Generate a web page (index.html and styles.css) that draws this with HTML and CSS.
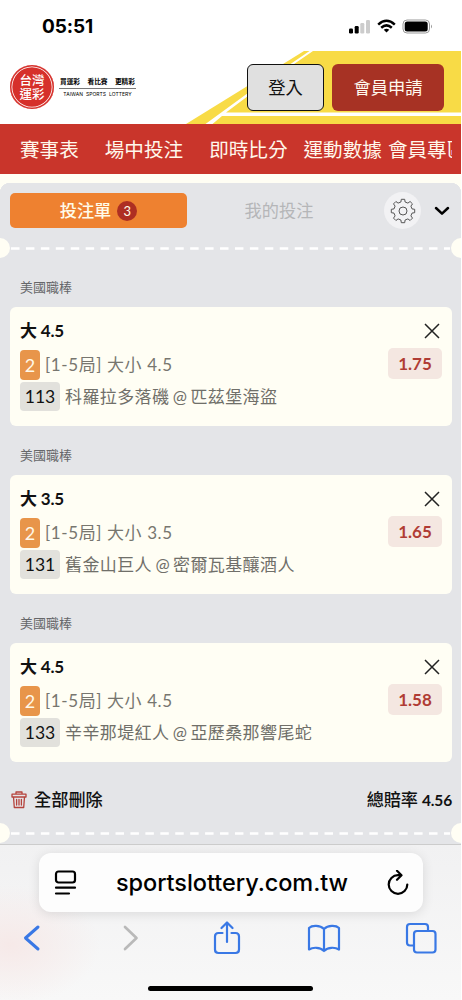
FILE: index.html
```
<!DOCTYPE html>
<html lang="zh-Hant">
<head>
<meta charset="utf-8">
<meta name="viewport" content="width=device-width, initial-scale=1">
<title>台灣運彩</title>
<link rel="stylesheet" href="styles.css">
</head>
<body>
<div class="phone">
  <div class="status">
    <span class="clock">05:51</span>
    <svg class="status-icons" width="86" height="18" viewBox="0 0 86 18">
      <rect x="2" y="10.500" width="4" height="5" rx="1.2"/>
      <rect x="7.7" y="8" width="4" height="7.500" rx="1.200"/>
      <rect x="13.300" y="5" width="4" height="10.500" rx="1.200" fill="#ccc"/>
      <rect x="19" y="2" width="4" height="13.500" rx="1.200" fill="#ccc"/>
      <g fill="none" stroke="#000" stroke-width="2.500"><path d="M31.200 6.600Q39.500 -1 47.800 6.600M34.200 9.700Q39.500 5 44.800 9.700"/></g>
      <path d="M39.500 14.500L36.700 11.800Q39.500 9.600 42.300 11.800Z"/>
      <rect x="56" y="2" width="26.500" height="13" rx="4" fill="none" stroke="#999"/>
      <rect x="57.700" y="3.600" width="23" height="9.800" rx="2.500"/>
      <path d="M84 6.500Q86 8.500 84 10.500Z" fill="#999"/>
    </svg>
  </div>

  <header class="header">
    <svg class="art" width="275" height="73" viewBox="0 0 275 73">
      <path d="M118 0H275V73H0Z" fill="#f8db46"/>
      <path d="M123.500 0L127 0L66 42L40 61.500H275V65H36L26.500 73H19.500L62 42Z" fill="#fff"/>
    </svg>
    <div class="brand">
      <div class="seal"><span>台灣</span><span>運彩</span></div>
      <div class="tagline">
        <div class="tag-zh"><span>買運彩</span><span>看比賽</span><span>更精彩</span></div>
        <div class="tag-en">TAIWAN&nbsp; SPORTS&nbsp; LOTTERY</div>
      </div>
    </div>
    <div class="account"><button class="btn login">登入</button><button class="btn join">會員申請</button></div>
  </header>

  <nav class="nav"><div class="nav-track">
    <a>賽事表</a><a>場中投注</a><a>即時比分</a><a class="near">運動數據</a><a>會員專區</a>
  </div></nav>

  <main class="slip">
    <div class="tabs">
      <div class="tab active">投注單<span class="count">3</span></div>
      <div class="tab">我的投注</div>
      <div class="gear"><svg width="28" height="28" viewBox="-14 -14 28 28" fill="none" stroke="#555" stroke-width="1" stroke-linejoin="round">
        <circle r="4"/>
        <path d="M-2.100 -9L-1.700 -11.700H1.700L2.100 -9L4.900 -7.900L7.100 -9.500L9.500 -7.100L7.900 -4.900L9 -2.100L11.700 -1.700V1.700L9 2.100L7.900 4.900L9.500 7.100L7.100 9.500L4.900 7.900L2.100 9L1.700 11.700H-1.700L-2.100 9L-4.900 7.900L-7.100 9.500L-9.500 7.100L-7.900 4.900L-9 2.100L-11.700 1.700V-1.700L-9 -2.100L-7.900 -4.900L-9.500 -7.100L-7.100 -9.500L-4.900 -7.900Z"/>
      </svg></div>
      <svg class="fold" width="16" height="10" viewBox="0 0 16 10"><path d="M2 2L8 7.600L14 2" fill="none" stroke="#000" stroke-width="2.500" stroke-linecap="round" stroke-linejoin="round"/></svg>
    </div>
    <div class="tear"><i></i><svg width="441" height="3" viewBox="0 0 441 3"><path d="M1 1.500H440" stroke="#fff" stroke-width="2.600" stroke-dasharray="8.500 6.430"/></svg><i></i></div>

    <section class="bet">
      <h2>美國職棒</h2>
      <div class="card">
        <div class="row"><b class="pick">大 4.5</b><svg class="close" width="16" height="16" viewBox="0 0 16 16"><path d="M1 1L15 15M15 1L1 15"/></svg></div>
        <div class="row mid"><div><span class="chip">2</span><span class="kind">[1-5局] 大小 4.5</span></div><b class="odds">1.75</b></div>
        <div class="match"><span class="num">113</span><span>科羅拉多落磯<span class="at">@</span>匹茲堡海盜</span></div>
      </div>
    </section>
    <section class="bet">
      <h2>美國職棒</h2>
      <div class="card">
        <div class="row"><b class="pick">大 3.5</b><svg class="close" width="16" height="16" viewBox="0 0 16 16"><path d="M1 1L15 15M15 1L1 15"/></svg></div>
        <div class="row mid"><div><span class="chip">2</span><span class="kind">[1-5局] 大小 3.5</span></div><b class="odds">1.65</b></div>
        <div class="match"><span class="num">131</span><span>舊金山巨人<span class="at">@</span>密爾瓦基釀酒人</span></div>
      </div>
    </section>
    <section class="bet">
      <h2>美國職棒</h2>
      <div class="card">
        <div class="row"><b class="pick">大 4.5</b><svg class="close" width="16" height="16" viewBox="0 0 16 16"><path d="M1 1L15 15M15 1L1 15"/></svg></div>
        <div class="row mid"><div><span class="chip">2</span><span class="kind">[1-5局] 大小 4.5</span></div><b class="odds">1.58</b></div>
        <div class="match"><span class="num">133</span><span>辛辛那堤紅人<span class="at">@</span>亞歷桑那響尾蛇</span></div>
      </div>
    </section>

    <div class="summary">
      <div class="clear"><svg width="16" height="18" viewBox="0 0 16 18" fill="none" stroke="#b5433c" stroke-width="1.300" stroke-linejoin="round" stroke-linecap="round"><path d="M1 3.200H15V6H1ZM5 3V1H11V3M2.500 6L3.300 16.500H12.700L13.500 6M5.600 8.500V14M8 8.500V14M10.400 8.500V14"/></svg>全部刪除</div>
      <div class="total">總賠率 <span>4.56</span></div>
    </div>
    <div class="tear bottom"><i></i><svg width="441" height="3" viewBox="0 0 441 3"><path d="M1 1.500H440" stroke="#fff" stroke-width="2.600" stroke-dasharray="8.500 6.430"/></svg><i></i></div>
  </main>

  <footer class="browser">
    <div class="address">
      <svg width="24" height="26" viewBox="0 0 24 26" fill="none" stroke="#000" stroke-width="2.200" stroke-linecap="round"><rect x="2" y="1.500" width="19" height="11" rx="2.500"/><path d="M2 17.700H21M2 23.500H15"/></svg>
      <span>sportslottery.com.tw</span>
      <svg width="24" height="26" viewBox="0 0 24 26" fill="none" stroke="#000" stroke-width="2.200" stroke-linecap="round" stroke-linejoin="round"><path d="M15 5.200H12A9.300 9.300 0 1 0 21.300 14.500M11 .8L15.500 5.200L11 9.800"/></svg>
    </div>
    <div class="tools">
      <svg width="18" height="28" viewBox="0 0 18 28"><path d="M15 3L2.500 14L15 25" stroke-width="3"/></svg>
      <svg width="18" height="28" viewBox="0 0 18 28"><path d="M3 3L14.500 14L3 25" stroke="#b9b9b9" stroke-width="2.700"/></svg>
      <svg width="28" height="34" viewBox="0 0 28 34"><path d="M9.500 12H5.500Q2 12 2 15.500V28.500Q2 32 5.500 32H22.500Q26 32 26 28.500V15.500Q26 12 22.500 12H18.500M14 21V2M8.500 7L14 1.500L19.500 7"/></svg>
      <svg width="34" height="29" viewBox="0 0 34 29"><path d="M17 5C13 1 5 1 2 4V25.500C6 23 13 23 17 27C21 23 28 23 32 25.500V4C29 1 21 1 17 5V27"/></svg>
      <svg width="33" height="33" viewBox="0 0 33 33"><path d="M8.500 23.500H5Q2 23.500 2 20.500V5Q2 2 5 2H20Q23 2 23 5V8.500"/><rect x="9" y="9" width="21.500" height="21.500" rx="3"/></svg>
    </div>
    <div class="home"></div>
  </footer>
</div>
</body>
</html>
```

FILE: styles.css
```
* { box-sizing: border-box; }
body { margin: 0; background: #fff; font-family: Lato, "Noto Sans CJK TC", sans-serif; }
.phone { width: 461px; height: 1000px; overflow: hidden; display: flex; flex-direction: column; background: #fff; }

.status { flex: none; height: 51px; padding: 0 28px 0 42px; display: flex; justify-content: space-between; align-items: center; }
.clock { font: 700 19px/20px Inter, sans-serif; letter-spacing: -.1px; padding-top: 2px; }
.status-icons { margin-top: 2px; }

.header { flex: none; height: 73px; padding: 13px 17px 0 10px; display: flex; justify-content: space-between; align-items: flex-start; position: relative; }
.art { position: absolute; right: 0; top: 0; }
.brand { display: flex; align-items: center; gap: 5px; padding-top: 1px; }
.seal { width: 44px; height: 44px; border-radius: 50%; background: #d6302b; box-shadow: inset 0 0 0 1.500px #d6302b, inset 0 0 0 2.300px #fff; color: #fff; font-size: 12.500px; font-weight: 500; display: flex; flex-direction: column; align-items: center; justify-content: center; }
.seal span { height: 14px; line-height: 14px; font-family: "Noto Sans CJK TC", sans-serif; }
.tagline { width: 77px; }
.tag-zh { display: flex; justify-content: space-between; padding: 0 1px 2px; border-bottom: 1px solid #777; font-weight: 700; font-size: 6.700px; line-height: 10px; }
.tag-en { font: 5px/8px Inter, sans-serif; text-align: center; white-space: nowrap; letter-spacing: .05px; padding-top: 1px; }
.account { position: relative; display: flex; gap: 8px; }
.btn { height: 47px; padding: 0; font: 400 17.300px/24px Lato, "Noto Sans CJK TC", sans-serif; border-radius: 6px; }
.login { width: 77px; background: #e0e0e0; border: 1.500px solid #111; color: #111; }
.join { width: 112px; background: #a73224; border: 0; color: #fff9ee; }

.nav { flex: none; height: 50px; background: #c9352b; padding: 0 9px 0 20px; }
.nav-track { height: 50px; padding-bottom: 2px; display: flex; gap: 26px; align-items: center; overflow: hidden; color: #fff8ec; font-size: 19.600px; white-space: nowrap; }
.nav-track a { flex: none; }
.nav-track .near { margin: 0 -20px 0 -10px; }

.slip { flex: none; height: 670px; border-top: 9px solid #fffef4; background: #e4e5e8; }
.tabs { height: 55px; padding: 0 10px; display: flex; align-items: center; background: radial-gradient(circle at 10px 10px, #e4e5e8 10px, #fffef4 10.500px) 0 0/10px 10px no-repeat, radial-gradient(circle at 0 10px, #e4e5e8 10px, #fffef4 10.500px) 100% 0/10px 10px no-repeat; }
.tab { width: 177px; height: 35px; display: flex; align-items: center; justify-content: center; gap: 6px; font-size: 17.200px; line-height: 24px; color: #b5b6b8; }
.tab + .tab { width: 184px; }
.tab.active { background: #ee8130; color: #fffbe9; font-weight: 500; border-radius: 5px; }
.count { width: 20px; height: 20px; border-radius: 50%; background: #ae2e22; font: 400 13px/20px Lato, sans-serif; text-align: center; }
.gear { width: 37px; height: 37px; margin-left: 13px; border-radius: 50%; background: #f2f2f4; display: grid; place-items: center; }
.fold { margin-left: 13px; }
.tear { height: 20px; display: flex; align-items: center; }
.tear i { flex: none; width: 10px; height: 20px; background: #fffef4; border-radius: 0 10px 10px 0; }
.tear i:last-child { border-radius: 10px 0 0 10px; }
.tear svg { flex: none; }

.bet { height: 168px; padding: 18px 9px 0 10px; }
.bet h2 { margin: 0; padding: 0 10px; font-size: 13px; line-height: 23px; font-weight: 400; color: #66676a; height: 31px; }
.card { height: 119px; background: #fffef4; border-radius: 6px; padding: 11px 10px 0; }
.row { display: flex; justify-content: space-between; align-items: center; height: 26px; }
.pick { font-size: 17px; font-weight: 700; color: #111; line-height: 22px; padding-bottom: 1px; letter-spacing: -.2px; }
.close { margin-right: 2px; stroke: #222; stroke-width: 1.500; }
.mid { height: 36px; margin-top: 1px; }
.mid > div { display: flex; align-items: center; gap: 5px; padding-top: 3px; }
.chip { width: 20px; height: 30px; border-radius: 4px; background: #e8954a; color: #fff8e8; font-size: 18px; line-height: 30px; text-align: center; }
.kind { font-size: 17px; line-height: 28px; letter-spacing: .6px; color: #77766f; white-space: nowrap; }
.odds { width: 54px; height: 31px; border-radius: 5px; background: #f4e7e1; color: #b03c34; font-size: 17px; line-height: 32px; text-align: center; }
.match { display: flex; align-items: center; height: 30px; gap: 5px; font-size: 17px; line-height: 30px; color: #706f69; white-space: nowrap; letter-spacing: .4px; }
.match > span + span { padding-top: 1px; }
.at { display: inline-block; width: 21px; text-align: center; letter-spacing: 0; }
.num { width: 40px; height: 29px; border-radius: 4px; background: #e2e1dc; color: #111; font-size: 17.500px; line-height: 30px; text-align: center; letter-spacing: 0; }

.summary { height: 61px; padding: 26px 9px 0 11px; display: flex; justify-content: space-between; font-size: 17.200px; font-weight: 500; line-height: 24px; color: #111; }
.clear { display: flex; align-items: center; gap: 7px; height: 24px; }
.total { letter-spacing: -.15px; }
.total span { font-size: 15.500px; font-weight: 700; }

.browser { flex: none; height: 156px; background: radial-gradient(ellipse 90px 60px at 10px 100px, #f6e9e8, #f6f6f600), linear-gradient(#f1f1f2, #f8f8f8); border-top: 1px solid #ccc; padding-top: 8px; }
.address { width: 384px; height: 59px; margin-left: 39px; border-radius: 12px; background: #fdfdfd; box-shadow: 0 2px 12px #0000001c; display: flex; align-items: center; justify-content: space-between; padding: 0 13px 0 15px; }
.address span { font: 500 23.500px/30px Inter, sans-serif; letter-spacing: -.05px; }
.tools { height: 52px; padding: 0 23px; display: grid; grid-template-columns: 99px 91px 94px 98px 33px; align-items: center; }
.tools svg { fill: none; stroke: #3978e5; stroke-width: 2.200; stroke-linecap: round; stroke-linejoin: round; }
.home { width: 165px; height: 5px; border-radius: 3px; background: #000; margin: 22px auto 0; }
```
